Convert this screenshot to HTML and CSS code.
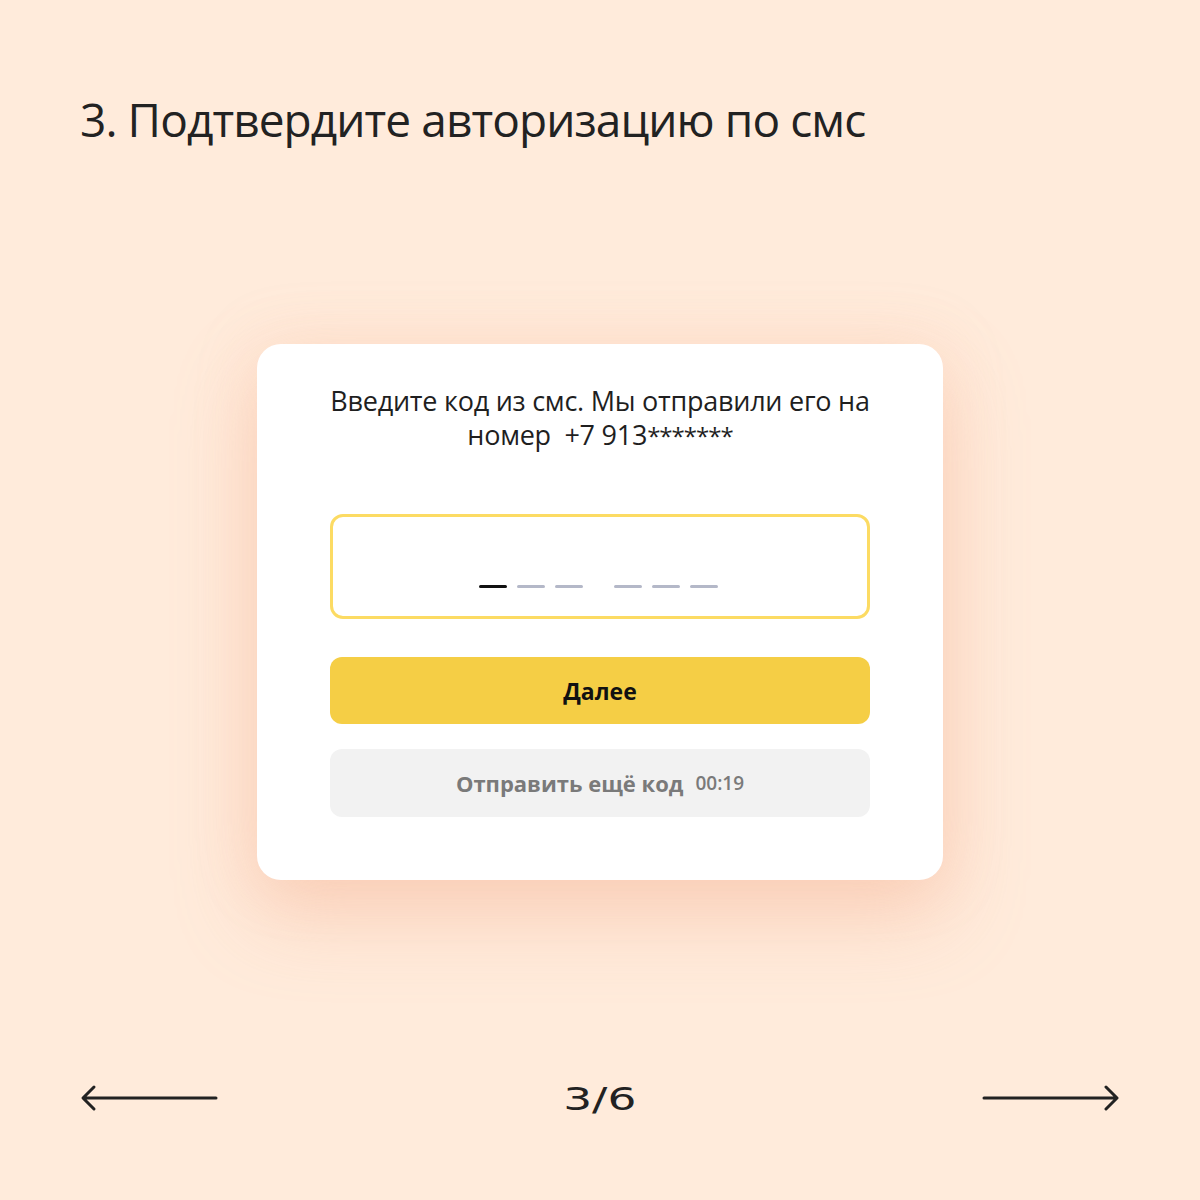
FILE: index.html
```html
<!DOCTYPE html>
<html lang="ru">
<head>
<meta charset="utf-8">
<link rel="stylesheet" href="styles.css">
</head>
<body>
<div class="page">
  <h1 class="title">3. Подтвердите авторизацию по смс</h1>
  <main class="stage">
    <section class="card">
      <p class="lead">Введите код из смс. Мы отправили его на<br>номер&nbsp; +7 913<span class="mask">*******</span></p>
      <div class="code-field">
        <div class="dashes">
          <span class="dash active"></span>
          <span class="dash"></span>
          <span class="dash"></span>
          <span class="sep"></span>
          <span class="dash"></span>
          <span class="dash"></span>
          <span class="dash"></span>
        </div>
      </div>
      <button class="btn primary">Далее</button>
      <button class="btn secondary">Отправить ещё код <span class="timer">00:19</span></button>
    </section>
  </main>
  <footer class="nav">
    <svg class="arrow" width="140" height="30" viewBox="0 0 140 30"><path d="M136 15H4M14 4L3 15l11 11" fill="none" stroke="#222" stroke-width="3" stroke-linecap="round" stroke-linejoin="round"/></svg>
    <span class="counter">3/6</span>
    <svg class="arrow" width="140" height="30" viewBox="0 0 140 30"><path d="M4 15h132M126 4l11 11-11 11" fill="none" stroke="#222" stroke-width="3" stroke-linecap="round" stroke-linejoin="round"/></svg>
  </footer>
</div>
</body>
</html>
```
FILE: styles.css
```css
* { box-sizing: border-box; }
html, body { margin: 0; padding: 0; }
body {
  background: #ffebdb;
  font-family: "Open Sans", "Noto Sans", sans-serif;
  color: #222;
}
.page {
  width: 1200px;
  height: 1200px;
  display: flex;
  flex-direction: column;
  padding: 0 80px;
}
.title {
  margin: 88px 0 0 0;
  font-size: 46px;
  font-weight: 400;
  line-height: 62px;
  letter-spacing: -0.92px;
  color: #222;
}
.stage {
  flex: 1;
  display: flex;
  justify-content: center;
  align-items: flex-start;
  padding-top: 194px;
}
.card {
  width: 686px;
  height: 536px;
  background: #fff;
  border-radius: 24px;
  box-shadow: 0 35px 80px rgba(244, 172, 140, 0.42), 0 0 60px rgba(250, 200, 170, 0.25);
  padding: 40px 60px 0;
  display: flex;
  flex-direction: column;
}
.lead {
  margin: 0;
  text-align: center;
  font-size: 27px;
  line-height: 34px;
  color: #1f1f1f;
  letter-spacing: -0.25px;
}
.mask {
  font-size: 24px;
  letter-spacing: -1px;
}
.code-field {
  margin: 61px 13px 0;
  height: 105px;
  border: 3px solid #fcdb63;
  border-radius: 13px;
  display: flex;
  justify-content: center;
  align-items: flex-end;
  padding-bottom: 28px;
}
.dashes {
  display: flex;
  align-items: center;
  gap: 10px;
  margin-left: -4px;
}
.dash {
  width: 28px;
  height: 3px;
  border-radius: 2px;
  background: #b4b8c8;
}
.dash.active { background: #111; }
.sep { width: 11px; }
.btn {
  width: auto;
  margin-left: 13px;
  margin-right: 13px;
  border: 0;
  border-radius: 12px;
  font-family: "Open Sans", "Noto Sans", sans-serif;
  font-weight: 700;
  font-size: 22px;
  display: flex;
  align-items: center;
  justify-content: center;
}
.primary {
  margin-top: 38px;
  height: 67px;
  background: #f5ce45;
  color: #111;
  font-size: 23px;
}
.secondary {
  margin-top: 25px;
  height: 68px;
  background: #f2f2f2;
  color: #7a7a7a;
  gap: 12px;
  padding-top: 1px;
}
.timer {
  font-size: 19px;
  font-weight: 600;
}
.nav {
  height: 130px;
  display: flex;
  justify-content: space-between;
  align-items: flex-start;
}
.arrow { display: block; margin-top: 13px; }
.counter {
  font-family: "DejaVu Sans", sans-serif;
  font-size: 32px;
  line-height: 38px;
  transform: scaleX(1.42);
  margin-top: 10px;
  color: #222;
}
```
